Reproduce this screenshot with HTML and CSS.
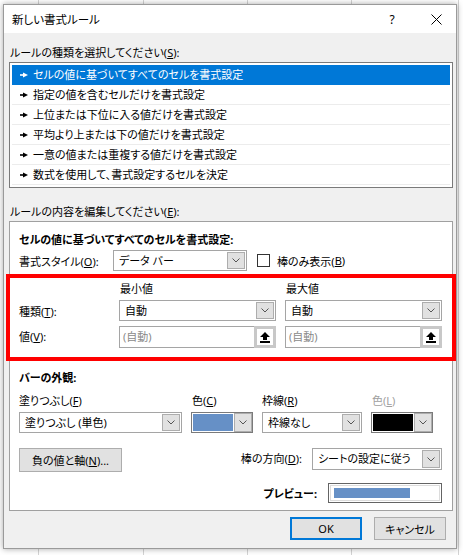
FILE: index.html
```html
<!DOCTYPE html>
<html lang="ja">
<head>
<meta charset="utf-8">
<title>新しい書式ルール</title>
<link rel="stylesheet" href="styles.css">
</head>
<body>
<div class="dialog">
  <div class="titlebar">
    <span class="title">新しい書式ルール</span>
    <span class="help">?</span>
    <span class="close"><svg width="11" height="11" viewBox="0 0 11 11"><path d="M0.5 0.5 L10.5 10.5 M10.5 0.5 L0.5 10.5" stroke="#000" stroke-width="1" fill="none"/></svg></span>
  </div>
  <div class="body">
    <div class="label l1">ルールの種類を選択してください(<u>S</u>):</div>
    <ul class="rules">
      <li class="sel"><svg class="arr" width="8" height="6" viewBox="0 0 8 6"><rect x="0" y="2.2" width="4" height="1.6"/><polygon points="3,0.5 8,3 3,5.5"/></svg>セルの値に基づいてすべてのセルを書式設定</li>
      <li><svg class="arr" width="8" height="6" viewBox="0 0 8 6"><rect x="0" y="2.2" width="4" height="1.6"/><polygon points="3,0.5 8,3 3,5.5"/></svg>指定の値を含むセルだけを書式設定</li>
      <li><svg class="arr" width="8" height="6" viewBox="0 0 8 6"><rect x="0" y="2.2" width="4" height="1.6"/><polygon points="3,0.5 8,3 3,5.5"/></svg>上位または下位に入る値だけを書式設定</li>
      <li><svg class="arr" width="8" height="6" viewBox="0 0 8 6"><rect x="0" y="2.2" width="4" height="1.6"/><polygon points="3,0.5 8,3 3,5.5"/></svg>平均より上または下の値だけを書式設定</li>
      <li><svg class="arr" width="8" height="6" viewBox="0 0 8 6"><rect x="0" y="2.2" width="4" height="1.6"/><polygon points="3,0.5 8,3 3,5.5"/></svg>一意の値または重複する値だけを書式設定</li>
      <li><svg class="arr" width="8" height="6" viewBox="0 0 8 6"><rect x="0" y="2.2" width="4" height="1.6"/><polygon points="3,0.5 8,3 3,5.5"/></svg>数式を使用して、書式設定するセルを決定</li>
    </ul>
    <div class="label l2">ルールの内容を編集してください(<u>E</u>):</div>
    <div class="editor">
      <div class="heading">セルの値に基づいてすべてのセルを書式設定:</div>
      <div class="style-row">
        <span class="lbl style-lbl">書式スタイル(<u>O</u>):</span>
        <div class="combo c-style"><span class="val">データ バー</span><span class="dd"><svg width="8" height="5" viewBox="0 0 8 5"><path d="M0.5 0.5 L4 4 L7.5 0.5" stroke="#555" fill="none"/></svg></span></div>
        <span class="check"><span class="box"></span>棒のみ表示(<u>B</u>)</span>
      </div>
      <div class="minmax">
        <span></span><span class="colh">最小値</span><span class="colh">最大値</span>
        <span class="lbl">種類(<u>T</u>):</span>
        <div class="combo"><span class="val">自動</span><span class="dd"><svg width="8" height="5" viewBox="0 0 8 5"><path d="M0.5 0.5 L4 4 L7.5 0.5" stroke="#555" fill="none"/></svg></span></div>
        <div class="combo"><span class="val">自動</span><span class="dd"><svg width="8" height="5" viewBox="0 0 8 5"><path d="M0.5 0.5 L4 4 L7.5 0.5" stroke="#555" fill="none"/></svg></span></div>
        <span class="lbl">値(<u>V</u>):</span>
        <div class="input"><span class="ph">(自動)</span><span class="up"><svg width="10" height="11" viewBox="0 0 10 11"><polygon points="5,0 10,5 7,5 7,8 3,8 3,5 0,5"/><rect x="0" y="9" width="10" height="2"/></svg></span></div>
        <div class="input"><span class="ph">(自動)</span><span class="up"><svg width="10" height="11" viewBox="0 0 10 11"><polygon points="5,0 10,5 7,5 7,8 3,8 3,5 0,5"/><rect x="0" y="9" width="10" height="2"/></svg></span></div>
      </div>
      <div class="heading h2">バーの外観:</div>
      <div class="appearance">
        <span class="lbl">塗りつぶし(<u>F</u>)</span>
        <span class="lbl">色(<u>C</u>)</span>
        <span class="lbl">枠線(<u>R</u>)</span>
        <span class="lbl disabled">色(<u>L</u>)</span>
        <div class="combo"><span class="val">塗りつぶし (単色)</span><span class="dd"><svg width="8" height="5" viewBox="0 0 8 5"><path d="M0.5 0.5 L4 4 L7.5 0.5" stroke="#555" fill="none"/></svg></span></div>
        <div class="combo color"><span class="swatch blue"></span><span class="dd"><svg width="8" height="5" viewBox="0 0 8 5"><path d="M0.5 0.5 L4 4 L7.5 0.5" stroke="#555" fill="none"/></svg></span></div>
        <div class="combo"><span class="val">枠線なし</span><span class="dd"><svg width="8" height="5" viewBox="0 0 8 5"><path d="M0.5 0.5 L4 4 L7.5 0.5" stroke="#555" fill="none"/></svg></span></div>
        <div class="combo color"><span class="swatch black"></span><span class="dd"><svg width="8" height="5" viewBox="0 0 8 5"><path d="M0.5 0.5 L4 4 L7.5 0.5" stroke="#555" fill="none"/></svg></span></div>
      </div>
      <div class="actions">
        <button class="btn neg">負の値と軸(<u>N</u>)...</button>
        <span class="spacer"></span>
        <span class="lbl">棒の方向(<u>D</u>):</span>
        <div class="combo dir"><span class="val">シートの設定に従う</span><span class="dd"><svg width="8" height="5" viewBox="0 0 8 5"><path d="M0.5 0.5 L4 4 L7.5 0.5" stroke="#555" fill="none"/></svg></span></div>
      </div>
      <div class="preview-row">
        <span class="bold">プレビュー:</span>
        <div class="preview"><div class="bar"></div></div>
      </div>
      <div class="redbox"></div>
    </div>
    <div class="footer">
      <button class="btn ok">OK</button>
      <button class="btn">キャンセル</button>
    </div>
  </div>
</div>
</body>
</html>
```
FILE: styles.css
```css
* { box-sizing: border-box; }
html, body { margin: 0; padding: 0; }
body {
  width: 463px;
  height: 555px;
  overflow: hidden;
  background-color: #fff;
  background-image:
    linear-gradient(to right, transparent 38px, #d4d4d4 38px, #d4d4d4 39px, transparent 39px, transparent 143px, #d4d4d4 143px, #d4d4d4 144px, transparent 144px, transparent 247px, #d4d4d4 247px, #d4d4d4 248px, transparent 248px, transparent 351px, #d4d4d4 351px, #d4d4d4 352px, transparent 352px, transparent 458px, #d4d4d4 458px, #d4d4d4 459px, transparent 459px);
  font-family: "Noto Sans", "Noto Sans CJK JP", sans-serif;
  font-size: 11px;
  font-feature-settings: "palt";
  color: #000;
  padding: 4px 0 0 3px;
}
u { text-decoration: underline; text-underline-offset: 1px; }
.dialog {
  width: 454px;
  height: 545px;
  background: #f0f0f0;
  box-shadow: 0 0 6px rgba(0,0,0,0.35);
  border: 1px solid #9a9a9a;
  display: flex;
  flex-direction: column;
}
.titlebar {
  height: 28px;
  background: #fff;
  display: flex;
  align-items: center;
  padding-left: 8px;
}
.title { flex: 1; font-size: 11.5px; }
.help { width: 12px; margin-right: 33px; text-align: center; font-size: 12px; }
.close { width: 11px; height: 11px; margin-right: 14px; display: flex; }
.body { padding: 0 2px 0 5px; flex: 1; }
.label { height: 18px; line-height: 18px; }
.l1 { margin-top: 11px; padding-left: 1px; }
.l2 { margin-top: 15px; padding-left: 1px; }
.rules {
  list-style: none;
  margin: 0;
  padding: 2px;
  border: 1px solid #7a7a7a;
  background: #fff;
  height: 126px;
  width: 444px;
}
.rules li {
  height: 20px;
  line-height: 19px;
  border-bottom: 1px solid #ececec;
  padding-left: 8px;
  display: flex;
  align-items: center;
  white-space: nowrap;
}
.rules li .arr { margin-right: 5px; fill: #000; flex: none; }
.rules li.sel { background: #0078d7; color: #fff; border-bottom-color: #0078d7; }
.rules li.sel .arr { fill: #fff; }

.editor {
  position: relative;
  width: 444px;
  height: 290px;
  background: #fff;
  border: 1px solid #a0a0a0;
  padding: 10px 10px 0 9px;
}
.heading { font-weight: bold; height: 16px; line-height: 16px; }
.style-row { display: flex; align-items: center; height: 21px; margin-top: 2px; }
.style-lbl { width: 94px; }
.combo {
  height: 21px;
  background: #fff;
  border: 1px solid #a5a5a5;
  display: flex;
  align-items: stretch;
}
.combo .val { flex: 1; padding-left: 5px; line-height: 19px; white-space: nowrap; overflow: hidden; }
.combo .dd {
  width: 18px;
  margin: 1px;
  background: #e1e1e1;
  border: 1px solid #adadad;
  display: flex;
  align-items: center;
  justify-content: center;
  flex: none;
}
.c-style { width: 134px; }
.check { display: flex; align-items: center; margin-left: 10px; }
.box { width: 13px; height: 13px; border: 1px solid #333; background: #fff; margin-right: 7px; }

.minmax {
  display: grid;
  grid-template-columns: 91px 157px 157px;
  column-gap: 9px;
  grid-template-rows: 16px 21px 22px;
  row-gap: 4px;
  margin-top: 9px;
  align-items: center;
}
.minmax .input { margin-top: 2px; }
.colh { padding-left: 1px; }
.input {
  height: 22px;
  border: 1px solid #a5a5a5;
  background: #fff;
  display: flex;
}
.input .ph { flex: 1; color: #8a8a8a; padding-left: 3px; line-height: 20px; }
.input .up {
  width: 22px;
  margin: -1px -1px -1px 0;
  border: 3px solid #c8c8c8;
  background: #fff;
  display: flex;
  align-items: center;
  justify-content: center;
}

.h2 { margin-top: 23px; }
.appearance {
  display: grid;
  grid-template-columns: 163px 62px 100px 62px;
  column-gap: 9px;
  grid-template-rows: 16px 21px;
  row-gap: 4px;
  margin-top: 6px;
  align-items: center;
}
.appearance > :nth-child(2) { margin-left: 1px; }
.appearance > :nth-child(4) { margin-left: 1px; }
.disabled { color: #a0a0a0; }
.combo.color { border: 1px solid #7a7a7a; padding: 1px; }
.combo.color .dd { margin: -1px -1px -1px 1px; }
.swatch { flex: 1; }
.swatch.blue { background: #6690c6; }
.swatch.black { background: #000; }

.actions { display: flex; align-items: flex-start; margin-top: 15px; height: 24px; }
.btn {
  font: inherit;
  color: #000;
  background: #e1e1e1;
  border: 1px solid #adadad;
  padding: 0;
  margin: 0;
}
.neg { width: 103px; height: 24px; }
.spacer { flex: 1; }
.actions .lbl { line-height: 22px; margin-right: 10px; }
.dir { width: 130px; height: 22px; }
.dir .val { line-height: 20px; }

.preview-row { display: flex; justify-content: flex-end; align-items: center; margin-top: 11px; height: 20px; }
.bold { font-weight: bold; margin-right: 11px; }
.preview {
  width: 114px;
  height: 20px;
  border: 1px solid #646464;
  background: #fff;
  padding: 1px;
}
.preview .bar {
  height: 100%;
  border: 1px solid #dcdcdc;
  padding: 2px 29px 2px 3px;
  background: linear-gradient(#6690c6, #6690c6) content-box;
}

.redbox {
  position: absolute;
  left: -4px;
  top: 52px;
  width: 450px;
  height: 87px;
  border: 4px solid #ff0000;
  pointer-events: none;
}

.footer { display: flex; justify-content: flex-end; gap: 12px; margin-top: 6px; padding-right: 8px; }
.footer .btn { width: 72px; height: 23px; }
.ok { border: 2px solid #0078d7; }
```
